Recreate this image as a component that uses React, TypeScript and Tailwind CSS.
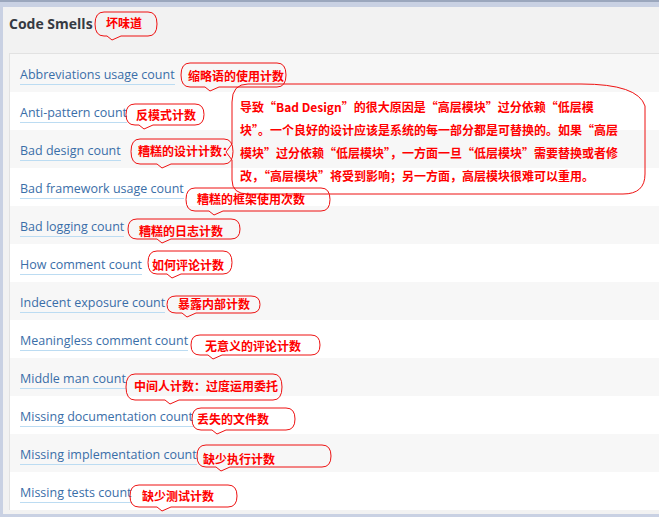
import React from "react";

const rows = [
  "Abbreviations usage count",
  "Anti-pattern count",
  "Bad design count",
  "Bad framework usage count",
  "Bad logging count",
  "How comment count",
  "Indecent exposure count",
  "Meaningless comment count",
  "Middle man count",
  "Missing documentation count",
  "Missing implementation count",
  "Missing tests count",
];

type Note = {
  x: number;
  y: number;
  w: number;
  h: number;
  tail: number;
  tx: number;
  ty: number;
  text: string;
};

// annotation callouts drawn over the list
const notes: Note[] = [
  { x: 95, y: 10, w: 62, h: 24, tail: 17, tx: 106, ty: 21, text: "坏味道" },
  { x: 181, y: 61, w: 105, h: 24, tail: 29, tx: 188, ty: 74, text: "缩略语的使用计数" },
  { x: 126, y: 102, w: 78, h: 21, tail: 18, tx: 136, ty: 113, text: "反模式计数" },
  { x: 131, y: 137, w: 102, h: 25, tail: 31, tx: 138, ty: 149, text: "糟糕的设计计数：" },
  { x: 186, y: 186, w: 144, h: 23, tail: 28, tx: 197, ty: 197, text: "糟糕的框架使用次数" },
  { x: 128, y: 217, w: 112, h: 20, tail: 34, tx: 139, ty: 229, text: "糟糕的日志计数" },
  { x: 148, y: 249, w: 84, h: 23, tail: 24, tx: 152, ty: 263, text: "如何评论计数" },
  { x: 167, y: 294, w: 93, h: 17, tail: 20, tx: 178, ty: 302, text: "暴露内部计数" },
  { x: 191, y: 333, w: 129, h: 20, tail: 22, tx: 205, ty: 344, text: "无意义的评论计数" },
  { x: 126, y: 372, w: 156, h: 26, tail: 44, tx: 134, ty: 384, text: "中间人计数：过度运用委托" },
  { x: 192, y: 406, w: 103, h: 22, tail: 25, tx: 197, ty: 417, text: "丢失的文件数" },
  { x: 197, y: 443, w: 134, h: 22, tail: 24, tx: 203, ty: 457, text: "缺少执行计数" },
  { x: 130, y: 483, w: 107, h: 22, tail: 32, tx: 142, ty: 494, text: "缺少测试计数" },
];

const bigLines = [
  "导致“Bad Design”的很大原因是“高层模块”过分依赖“低层模",
  "块”。一个良好的设计应该是系统的每一部分都是可替换的。如果“高层",
  "模块”过分依赖“低层模块”，一方面一旦“低层模块”需要替换或者修",
  "改，“高层模块”将受到影响；另一方面，高层模块很难可以重用。",
];

function Callout({ n }: { n: Note }) {
  const { w, h, tail } = n;
  const d = `M 9,0 H ${w - 9} Q ${w},0 ${w},${h / 2} Q ${w},${h} ${w - 9},${h} H ${tail + 9} L ${tail},${h + 4} L ${tail - 5},${h} H 9 Q 0,${h} 0,${h / 2} Q 0,0 9,0 Z`;
  return (
    <>
      <svg
        className="absolute overflow-visible"
        style={{ left: n.x, top: n.y, width: w, height: h }}
        viewBox={`0 0 ${w} ${h}`}
      >
        <path d={d} fill="none" stroke="#ee1111" strokeWidth="1" />
      </svg>
      <div
        className="absolute whitespace-nowrap text-[12px] leading-[16px] font-bold text-[#ff0000]"
        style={{ left: n.tx, top: n.ty - 8 }}
      >
        {n.text}
      </div>
    </>
  );
}

export default function App() {
  return (
    <div className="relative w-[659px] h-[517px] overflow-hidden bg-[#c9d1e3] border-t-2 border-[#9ba7bd] pt-[5px] pl-[3px] pb-[3px] font-['Noto_Sans_CJK_SC',sans-serif]">
      <div className="flex flex-col h-full bg-[#f2f2f2]">
        {/* Header */}
        <div className="h-[46px] pl-[6px] pt-[3px]">
          <span className="font-['Open_Sans',sans-serif] font-bold text-[14px] leading-[18px] text-[#363a42]">
            Code Smells
          </span>
        </div>

        {/* List */}
        <div className="ml-[6px] border-t border-l border-[#e2e2e2]">
          {rows.map((r, i) => (
            <div
              key={r}
              className={`h-[38px] pl-[10px] pt-[6px] ${i % 2 === 0 ? "bg-[#f7f7f7]" : "bg-white"}`}
            >
              <a className="inline-block font-['Open_Sans',sans-serif] text-[12.5px] leading-[18px] text-[#3a6ea8] border-b border-[#bcdcf2] cursor-pointer">
                {r}
              </a>
            </div>
          ))}
        </div>
      </div>

      {/* Big explanatory callout */}
      <svg className="absolute overflow-visible" style={{ left: 226, top: 80, width: 420, height: 115 }} viewBox="0 0 420 115">
        <path
          d="M 22,2 H 355 Q 412,2 419,24 V 92 Q 419,112 397,112 H 22 Q 6,112 6,98 V 78 L 0,70 L 6,62 V 20 Q 6,2 22,2 Z"
          fill="none"
          stroke="#ee1111"
          strokeWidth="1"
        />
      </svg>
      <div className="absolute left-[240px] top-[97px] flex flex-col gap-[7px]">
        {bigLines.map((l) => (
          <div key={l} className="whitespace-nowrap text-[12px] leading-[16px] font-bold text-[#ff0000]">
            {l}
          </div>
        ))}
      </div>

      {notes.map((n) => (
        <Callout key={n.text} n={n} />
      ))}
    </div>
  );
}
